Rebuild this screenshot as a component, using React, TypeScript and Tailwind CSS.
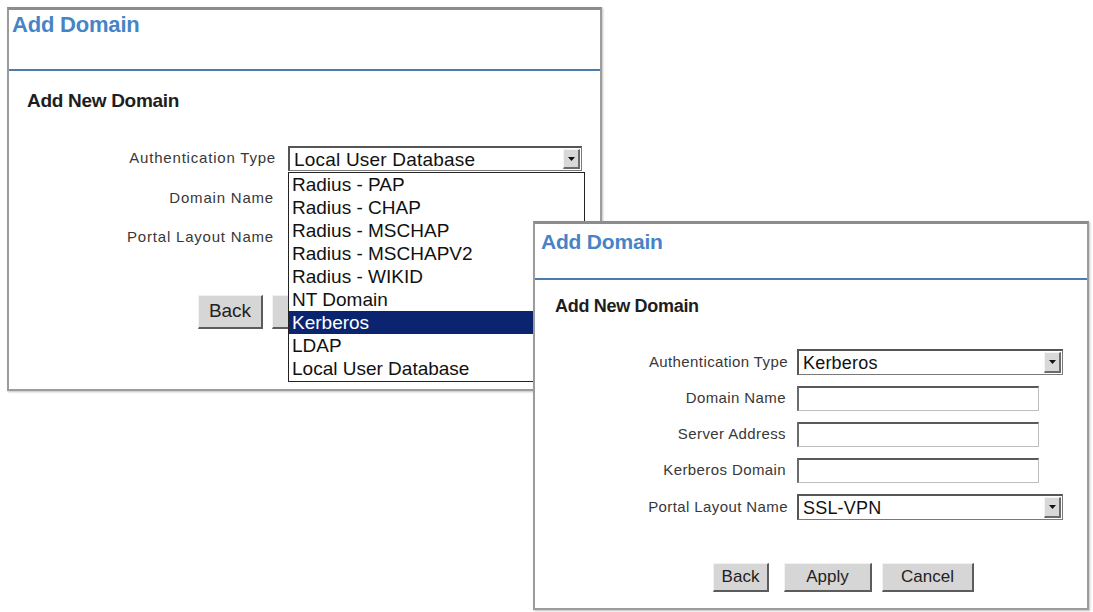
import React from 'react';

const font = { fontFamily: '"Liberation Sans", Arial, sans-serif' };

const authTypes = [
  'Radius - PAP',
  'Radius - CHAP',
  'Radius - MSCHAP',
  'Radius - MSCHAPV2',
  'Radius - WIKID',
  'NT Domain',
  'Kerberos',
  'LDAP',
  'Local User Database',
];

function ArrowButton() {
  return (
    <div className="h-[calc(100%-2px)] w-[17px] shrink-0 bg-[#d8d8d8] border-l border-t border-[#f4f4f4] border-r-2 border-b-2 border-r-[#6b6b6b] border-b-[#6b6b6b] flex items-center justify-center">
      <svg width="7" height="4" viewBox="0 0 7 4">
        <path d="M0 0 H7 L3.5 4 Z" fill="#111" />
      </svg>
    </div>
  );
}

function Select({ value, className, text }: { value: string; className: string; text: string }) {
  return (
    <div className={`${className} flex items-center bg-white border border-[#7a7a7a] border-t-2 border-l-2 border-t-[#555] border-l-[#555] pl-1 pr-[1px]`}>
      <span className={`flex-1 ${text} text-[#111] leading-none tracking-[0.2px]`}>{value}</span>
      <ArrowButton />
    </div>
  );
}

function Field({ className }: { className: string }) {
  return <div className={`${className} bg-white border border-[#bdbdbd] border-t-2 border-l-2 border-t-[#5a5a5a] border-l-[#6a6a6a]`} />;
}

function Button({ label, className }: { label: string; className: string }) {
  return (
    <div className={`${className} shrink-0 bg-[#d6d6d6] border-t border-l border-[#f2f2f2] border-r-2 border-b-2 border-r-[#5c5c5c] border-b-[#5c5c5c] flex items-center justify-center text-[#222]`}>
      {label}
    </div>
  );
}

function WindowFrame({ className, children }: { className: string; children: React.ReactNode }) {
  return (
    <div className={`absolute bg-white border-2 border-[#9c9c9c] border-t-[3px] border-t-[#8c8c8c] shadow-[1px_1px_2px_rgba(0,0,0,0.25)] ${className}`}>
      {children}
    </div>
  );
}

export default function App() {
  return (
    <div className="relative w-[1093px] h-[612px] bg-white overflow-hidden" style={font}>
      {/* back window, list of auth types opened */}
      <WindowFrame className="z-[1] left-[7px] top-[7px] w-[595px] h-[384px]">
        <div className="h-[59px] pl-[3px] pt-[2px]">
          <div className="text-[22px] font-bold text-[#4784c6] leading-[26px] tracking-[-0.2px]">Add Domain</div>
        </div>
        <div className="h-[2px] bg-[#4b7cab]" />
        <div className="pl-[18px] pt-[19px] text-[19px] font-bold text-[#1e1e1e] leading-[22px] tracking-[-0.3px]">Add New Domain</div>

        <div className="mt-[34px] grid grid-cols-[267px_294px] gap-x-[12px] gap-y-[15px] items-center text-[15px] tracking-[0.8px] text-[#383838]">
          <div className="text-right">Authentication Type</div>
          <div className="relative">
            <Select value="Local User Database" className="h-[25px]" text="text-[19px]" />
            <div className="absolute left-0 top-[26px] w-[297px] h-[210px] bg-white border border-[#222] z-10 flex flex-col tracking-normal">
              {authTypes.map((t) => (
                <div
                  key={t}
                  className={`h-[23px] px-[3px] flex items-center text-[19px] leading-none ${t === 'Kerberos' ? 'bg-[#0b2470] text-white' : 'text-[#111]'}`}
                >
                  {t}
                </div>
              ))}
            </div>
          </div>
          <div className="text-right pr-[2px]">Domain Name</div>
          <Field className="h-[24px]" />
          <div className="text-right pr-[2px]">Portal Layout Name</div>
          <Select value="SSL-VPN" className="h-[24px]" text="text-[18px]" />
        </div>

        <div className="mt-[46px] pl-[189px] flex gap-[9px] text-[19px]">
          <Button label="Back" className="w-[65px] h-[34px]" />
          <Button label="Apply" className="w-[88px] h-[34px]" />
          <Button label="Cancel" className="w-[100px] h-[34px]" />
        </div>
      </WindowFrame>

      {/* front window, Kerberos selected */}
      <WindowFrame className="z-[2] left-[533px] top-[221px] w-[556px] h-[389px]">
        <div className="h-[54px] pl-[6px] pt-[6px]">
          <div className="text-[21px] font-bold text-[#4784c6] leading-[24px] tracking-[-0.2px]">Add Domain</div>
        </div>
        <div className="h-[2px] bg-[#4b7cab]" />
        <div className="pl-[20px] pt-[16px] text-[18px] font-bold text-[#1e1e1e] leading-[21px] tracking-[-0.3px]">Add New Domain</div>

        <div className="mt-[32px] grid grid-cols-[253px_266px] gap-x-[9px] gap-y-[11px] items-center text-[15px] tracking-[0.4px] text-[#383838]">
          <div className="text-right">Authentication Type</div>
          <Select value="Kerberos" className="h-[26px]" text="text-[18px]" />
          <div className="text-right pr-[2px]">Domain Name</div>
          <Field className="h-[25px] w-[242px]" />
          <div className="text-right pr-[2px]">Server Address</div>
          <Field className="h-[25px] w-[242px]" />
          <div className="text-right pr-[2px]">Kerberos Domain</div>
          <Field className="h-[25px] w-[242px]" />
          <div className="text-right">Portal Layout Name</div>
          <Select value="SSL-VPN" className="h-[26px]" text="text-[18px]" />
        </div>

        <div className="mt-[43px] pl-[178px] flex text-[17px]">
          <Button label="Back" className="w-[56px] h-[29px]" />
          <Button label="Apply" className="ml-[15px] w-[88px] h-[29px]" />
          <Button label="Cancel" className="ml-[10px] w-[92px] h-[29px]" />
        </div>
      </WindowFrame>
    </div>
  );
}
